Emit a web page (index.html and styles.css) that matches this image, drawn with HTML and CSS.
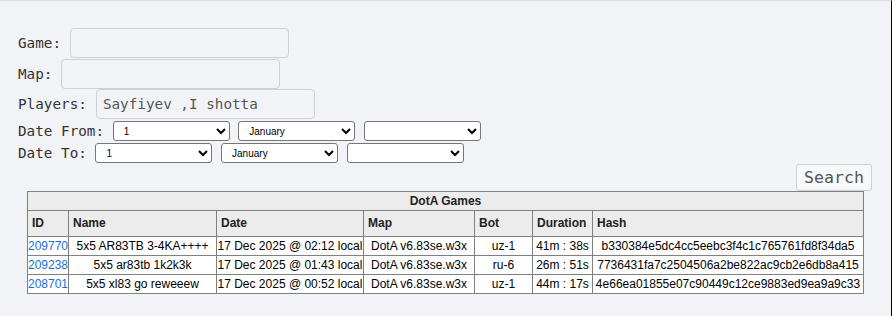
FILE: index.html
```html
<!DOCTYPE html>
<html>
<head>
<meta charset="utf-8">
<title>DotA Games</title>
<link rel="stylesheet" href="styles.css">
</head>
<body>
<div class="page">
  <form class="filters">
    <div class="row field"><label>Game:</label><input class="text" type="text" value=""></div>
    <div class="row field"><label>Map:</label><input class="text" type="text" value=""></div>
    <div class="row field"><label>Players:</label><input class="text" type="text" value="Sayfiyev ,I_shotta"></div>
    <div class="row date"><label>Date From:</label>
      <select><option>1</option></select>
      <select><option>January</option></select>
      <select><option></option></select>
    </div>
    <div class="row date"><label>Date To:</label>
      <select><option>1</option></select>
      <select><option>January</option></select>
      <select><option></option></select>
    </div>
    <div class="actions"><button type="button" class="search">Search</button></div>
  </form>
  <table class="games">
    <colgroup>
      <col class="c-id"><col class="c-name"><col class="c-date"><col class="c-map"><col class="c-bot"><col class="c-dur"><col class="c-hash">
    </colgroup>
    <thead>
      <tr><th colspan="7" class="title">DotA Games</th></tr>
      <tr class="heads"><th>ID</th><th>Name</th><th>Date</th><th>Map</th><th>Bot</th><th>Duration</th><th>Hash</th></tr>
    </thead>
    <tbody>
      <tr><td><a href="#">209770</a></td><td>5x5 AR83TB 3-4KA++++</td><td>17 Dec 2025 @ 02:12 local</td><td>DotA v6.83se.w3x</td><td>uz-1</td><td>41m : 38s</td><td>b330384e5dc4cc5eebc3f4c1c765761fd8f34da5</td></tr>
      <tr><td><a href="#">209238</a></td><td>5x5 ar83tb 1k2k3k</td><td>17 Dec 2025 @ 01:43 local</td><td>DotA v6.83se.w3x</td><td>ru-6</td><td>26m : 51s</td><td>7736431fa7c2504506a2be822ac9cb2e6db8a415</td></tr>
      <tr><td><a href="#">208701</a></td><td>5x5 xl83 go reweeew</td><td>17 Dec 2025 @ 00:52 local</td><td>DotA v6.83se.w3x</td><td>uz-1</td><td>44m : 17s</td><td>4e66ea01855e07c90449c12ce9883ed9ea9a9c33</td></tr>
    </tbody>
  </table>
</div>
</body>
</html>
```
FILE: styles.css
```css
html, body {
  margin: 0;
  padding: 0;
  background: #f2f3f7;
}
.page {
  box-sizing: border-box;
  height: 316px;
  border-top: 1px solid #dcdde3;
  border-right: 1px solid #000;
  padding: 27px 0 0 18px;
  font-family: "DejaVu Sans Mono", monospace;
  font-size: 14.3px;
  color: #333;
}
.filters {
  margin: 0;
}
.row {
  display: flex;
  align-items: center;
}
.field {
  gap: 9px;
  height: 30px;
  margin-bottom: 0.5px;
}
.text {
  box-sizing: border-box;
  width: 219px;
  height: 30px;
  border: 1px solid #cfd0d4;
  border-radius: 4px;
  background: transparent;
  padding: 0 6px;
  font-family: "DejaVu Sans Mono", monospace;
  font-size: 14.3px;
  line-height: 28px;
  color: #555;
  outline: none;
}
.date {
  gap: 8.6px;
  height: 20px;
  margin-top: 2px;
}
.date select {
  box-sizing: border-box;
  width: 117px;
  height: 20px;
  font-family: "Liberation Sans", Arial, sans-serif;
  font-size: 10px;
  color: #000;
  background: #fff;
  border: 1px solid #767676;
  border-radius: 3px;
  padding: 0 0 0 6px;
}
.actions {
  display: flex;
  justify-content: flex-end;
  padding-right: 19px;
  margin-top: 1px;
}
.search {
  box-sizing: border-box;
  width: 76px;
  height: 27px;
  padding: 0;
  border: 1px solid #cfd0d4;
  border-radius: 3px;
  background: #f7f8fa;
  font-family: "DejaVu Sans Mono", monospace;
  font-size: 16.6px;
  color: #555;
}
.games {
  margin: 0 0 0 9px;
  border-collapse: collapse;
  table-layout: fixed;
  width: 837px;
  font-family: "Liberation Sans", Arial, sans-serif;
  font-size: 12px;
  color: #000;
  border: 1px solid #808080;
}
.c-id { width: 41px; }
.c-name { width: 148px; }
.c-date { width: 147px; }
.c-map { width: 111px; }
.c-bot { width: 58px; }
.c-dur { width: 60px; }
.games th, .games td {
  border: 1px solid #808080;
  line-height: 14px;
  white-space: nowrap;
}
.games th {
  background: #ececec;
  font-weight: bold;
  text-align: left;
  color: #222;
}
.games th.title {
  text-align: center;
  padding: 2px;
}
.heads th {
  padding: 5px 3px 6px 4px;
}
.games td {
  background: #fff;
  text-align: center;
  padding: 2px 0;
  overflow: visible;
}
.games a {
  color: #1a6fd6;
  text-decoration: none;
}
```
